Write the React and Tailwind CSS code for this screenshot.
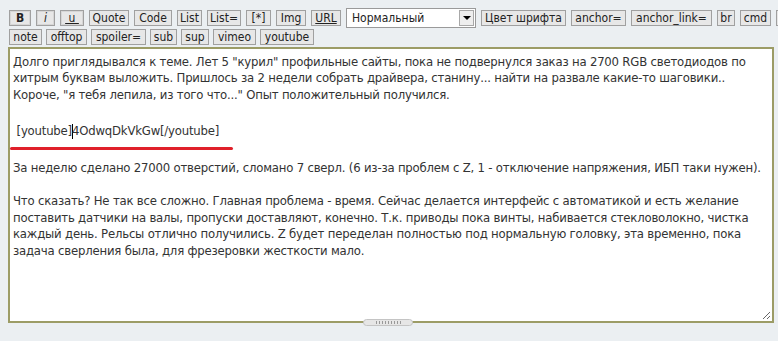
import React from "react";

const F = { fontFamily: '"DejaVu Sans Condensed", "DejaVu Sans", sans-serif' };

function Btn({ w, children, strong }) {
  return (
    <div
      className={`h-[16px] shrink-0 flex items-center justify-center bg-[#e7e7e7] text-[12px] leading-none text-[#222] border border-[#a0a0a0] ${strong ? "shadow-[inset_0_0_0_1px_#d6d6d6]" : ""}`}
      style={{ width: w }}
    >
      {children}
    </div>
  );
}

export default function App() {
  const row1 = [
    [22, <b>B</b>, true],
    [19, <i>i</i>, true],
    [24, <span className="underline">&nbsp;u&nbsp;</span>, true],
    [40, "Quote"],
    [38, "Code"],
    [25, "List"],
    [34, "List="],
    [25, "[*]"],
    [30, "Img"],
    [30, <span className="underline">URL</span>],
  ];
  const row1b = [
    [85, "Цвет шрифта"],
    [55, "anchor="],
    [81, "anchor_link="],
    [18, "br"],
    [31, "cmd"],
    [31, ""],
  ];
  const row2 = [
    [33, "note"],
    [41, "offtop"],
    [55, "spoiler="],
    [27, "sub"],
    [28, "sup"],
    [43, "vimeo"],
    [54, "youtube"],
  ];
  return (
    <div className="w-[778px] h-[341px] bg-[#ebeff2] overflow-hidden" style={F}>
      <div className="pt-[8px] pl-[9px]">
        <div className="flex items-center gap-[5px] h-[20px] whitespace-nowrap">
          {row1.map(([w, c, s], i) => (
            <Btn key={i} w={w} strong={s}>{c}</Btn>
          ))}
          <div className="w-[130px] h-[20px] shrink-0 bg-white border border-[#9a9a9a] flex items-center justify-between pl-[5px] pr-[1px] text-[12px] text-[#222]">
            <span>Нормальный</span>
            <div className="w-[15px] h-[16px] bg-[#eeeeee] border border-[#a8a8a8] flex items-center justify-center">
              <div className="w-0 h-0 border-l-[4px] border-r-[4px] border-t-[4px] border-l-transparent border-r-transparent border-t-black" />
            </div>
          </div>
          {row1b.map(([w, c], i) => (
            <Btn key={i} w={w}>{c}</Btn>
          ))}
        </div>
        <div className="flex items-center gap-[4px] h-[16px] mt-[1px] whitespace-nowrap">
          {row2.map(([w, c], i) => (
            <Btn key={i} w={w}>{c}</Btn>
          ))}
        </div>
      </div>
      <div className="relative mt-[2px] ml-[8px] w-[766px] h-[276px] bg-white border-2 border-[#9c9c66]">
        <div className="pl-[3px] pt-[4.5px] text-[13px] leading-[16.5px] tracking-[-0.2px] text-[#333] whitespace-pre">
          <div>Долго приглядывался к теме. Лет 5 "курил" профильные сайты, пока не подвернулся заказ на 2700 RGB светодиодов по</div>
          <div>хитрым буквам выложить. Пришлось за 2 недели собрать драйвера, станину... найти на развале какие-то шаговики..</div>
          <div>Короче, "я тебя лепила, из того что..." Опыт положительный получился.</div>
          <div className="mt-[20px]">
            {" [youtube]"}
            <span className="inline-block w-px h-[15px] bg-black align-middle -mr-px" />
            {"4OdwqDkVkGw[/youtube]"}
          </div>
          <div className="mt-[7.5px] -ml-[3px] w-[223px] h-[3px] rounded-full bg-[#e0202a]" />
          <div className="mt-[10px]">За неделю сделано 27000 отверстий, сломано 7 сверл. (6 из-за проблем с Z, 1 - отключение напряжения, ИБП таки нужен).</div>
          <div className="mt-[16.5px]">Что сказать? Не так все сложно. Главная проблема - время. Сейчас делается интерфейс с автоматикой и есть желание</div>
          <div>поставить датчики на валы, пропуски доставляют, конечно. Т.к. приводы пока винты, набивается стекловолокно, чистка</div>
          <div>каждый день. Рельсы отлично получились. Z будет переделан полностью под нормальную головку, эта временно, пока</div>
          <div>задача сверления была, для фрезеровки жесткости мало.</div>
        </div>
        <svg className="absolute right-[1px] bottom-[1px]" width="9" height="9" viewBox="0 0 9 9">
          <path d="M8 1 L1 8 M8 5 L5 8" stroke="#666" strokeWidth="1" />
        </svg>
        <div className="absolute left-[353px] bottom-[-5px] w-[50px] h-[7px] rounded-full bg-[#e6e6e6] border border-[#c4c4c4] flex items-center justify-center gap-[2px]">
          {Array.from({ length: 9 }).map((_, i) => (
            <div key={i} className="w-px h-[3px] bg-[#999]" />
          ))}
        </div>
      </div>
    </div>
  );
}
